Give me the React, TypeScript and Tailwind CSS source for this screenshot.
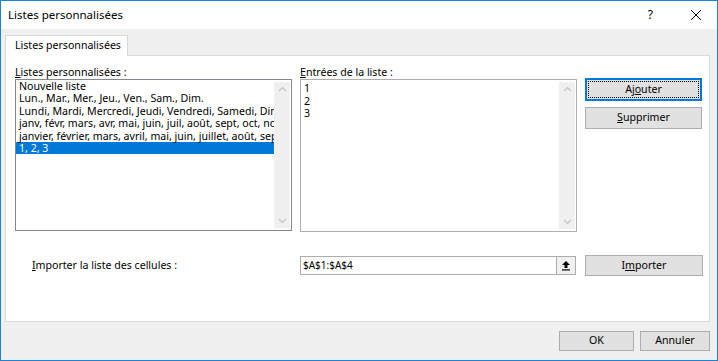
import React from "react";

const LISTS = [
  "Nouvelle liste",
  "Lun., Mar., Mer., Jeu., Ven., Sam., Dim.",
  "Lundi, Mardi, Mercredi, Jeudi, Vendredi, Samedi, Dimanche",
  "janv, févr, mars, avr, mai, juin, juil, août, sept, oct, nov, déc",
  "janvier, février, mars, avril, mai, juin, juillet, août, septembre, octobre, novembre, décembre",
  "1, 2, 3",
];

const ENTRIES = ["1", "2", "3"];

function Scrollbar() {
  return (
    <div className="my-[2px] mr-[1px] flex w-[16px] shrink-0 flex-col items-center justify-between bg-[#f0f0f0] py-[4px]">
      <svg width="9" height="6" viewBox="0 0 9 6" className="text-[#c2c2c2]">
        <path d="M1 5 L4.5 1.5 L8 5" fill="none" stroke="currentColor" strokeWidth="1.2" />
      </svg>
      <svg width="9" height="6" viewBox="0 0 9 6" className="text-[#c2c2c2]">
        <path d="M1 1 L4.5 4.5 L8 1" fill="none" stroke="currentColor" strokeWidth="1.2" />
      </svg>
    </div>
  );
}

function Button({
  children,
  className = "",
  focused = false,
}: {
  children: React.ReactNode;
  className?: string;
  focused?: boolean;
}) {
  return (
    <div
      className={
        "flex items-center justify-center bg-[#e1e1e1] " +
        (focused ? "border-2 border-[#0078d7] p-[1px] " : "border border-[#adadad] ") +
        className
      }
    >
      {focused ? (
        <div className="flex h-full w-full items-center justify-center border border-dotted border-black">
          {children}
        </div>
      ) : (
        children
      )}
    </div>
  );
}

export default function App() {
  return (
    <div className="flex h-[361px] w-[718px] flex-col border border-[#1883d7] bg-[#f0f0f0] font-['Noto_Sans',sans-serif] text-[10.6px] text-black">
      {/* title bar */}
      <div className="flex h-[28px] shrink-0 items-center bg-white pl-[7px]">
        <span className="text-[11.5px]">Listes personnalisées</span>
        <span className="ml-auto mr-[37px] text-[12px]">?</span>
        <svg width="12" height="12" viewBox="0 0 12 12" className="mr-[15px]">
          <path d="M1 1 L11 11 M11 1 L1 11" stroke="black" strokeWidth="1" />
        </svg>
      </div>

      <div className="flex flex-col pl-[4px] pt-[6px]">
        {/* tab */}
        <div className="relative z-10 -mb-px flex h-[21px] w-[123px] items-center border border-b-0 border-[#d9d9d9] bg-white pl-[9px]">
          Listes personnalisées
        </div>

        {/* panel */}
        <div className="flex h-[267px] w-[705px] flex-col border border-[#d9d9d9] bg-white pl-[9px] pt-[9px]">
          <div className="flex">
            <div className="w-[277px]">
              <div className="h-[14px] leading-[14px]">
                <span className="underline">L</span>istes personnalisées :
              </div>
              <div className="flex h-[152px] border border-[#828790] bg-white">
                <div className="min-w-0 flex-1 overflow-hidden">
                  {LISTS.map((l, i) => (
                    <div
                      key={l}
                      className={
                        "h-[12.4px] whitespace-nowrap pl-[3px] leading-[12.4px] " +
                        (i === LISTS.length - 1 ? "bg-[#0078d7] text-white" : "")
                      }
                    >
                      {l}
                    </div>
                  ))}
                </div>
                <Scrollbar />
              </div>
            </div>

            <div className="ml-[8px] w-[277px]">
              <div className="h-[14px] leading-[14px]">
                <span className="underline">E</span>ntrées de la liste :
              </div>
              <div className="flex h-[153px] border border-[#adadad] bg-white">
                <div className="min-w-0 flex-1 overflow-hidden pt-[2px]">
                  {ENTRIES.map((e) => (
                    <div key={e} className="h-[12.5px] pl-[3px] leading-[12.5px]">
                      {e}
                    </div>
                  ))}
                </div>
                <Scrollbar />
              </div>
            </div>

            <div className="ml-[8px] mt-[13px] flex w-[117px] flex-col gap-[6px]">
              <Button focused className="h-[23px]">
                <span>
                  Aj<span className="underline">o</span>uter
                </span>
              </Button>
              <Button className="h-[22px]">
                <span>
                  <span className="underline">S</span>upprimer
                </span>
              </Button>
            </div>
          </div>

          <div className="mt-[23px] flex items-center">
            <div className="w-[285px] pl-[17px]">
              <span className="underline">I</span>mporter la liste des cellules :
            </div>
            <div className="flex h-[19px] w-[276px] items-center border border-[#adadad] bg-white">
              <span className="flex-1 pl-[2px] text-[10px]">$A$1:$A$4</span>
              <div className="flex h-full w-[19px] items-center justify-center border-l border-[#adadad] bg-[#f0f0f0]">
                <svg width="10" height="11" viewBox="0 0 10 11">
                  <path d="M5 1 L1 5 L3.5 5 L3.5 8 L6.5 8 L6.5 5 L9 5 Z" fill="black" />
                  <rect x="1" y="9.3" width="8" height="1.2" fill="black" />
                </svg>
              </div>
            </div>
            <Button className="ml-[9px] h-[21px] w-[118px]">
              <span>
                I<span className="underline">m</span>porter
              </span>
            </Button>
          </div>
        </div>
      </div>

      {/* footer */}
      <div className="mt-[9px] flex justify-end gap-[6px] pr-[7px]">
        <Button className="h-[20px] w-[75px]">OK</Button>
        <Button className="h-[20px] w-[70px]">Annuler</Button>
      </div>
    </div>
  );
}
